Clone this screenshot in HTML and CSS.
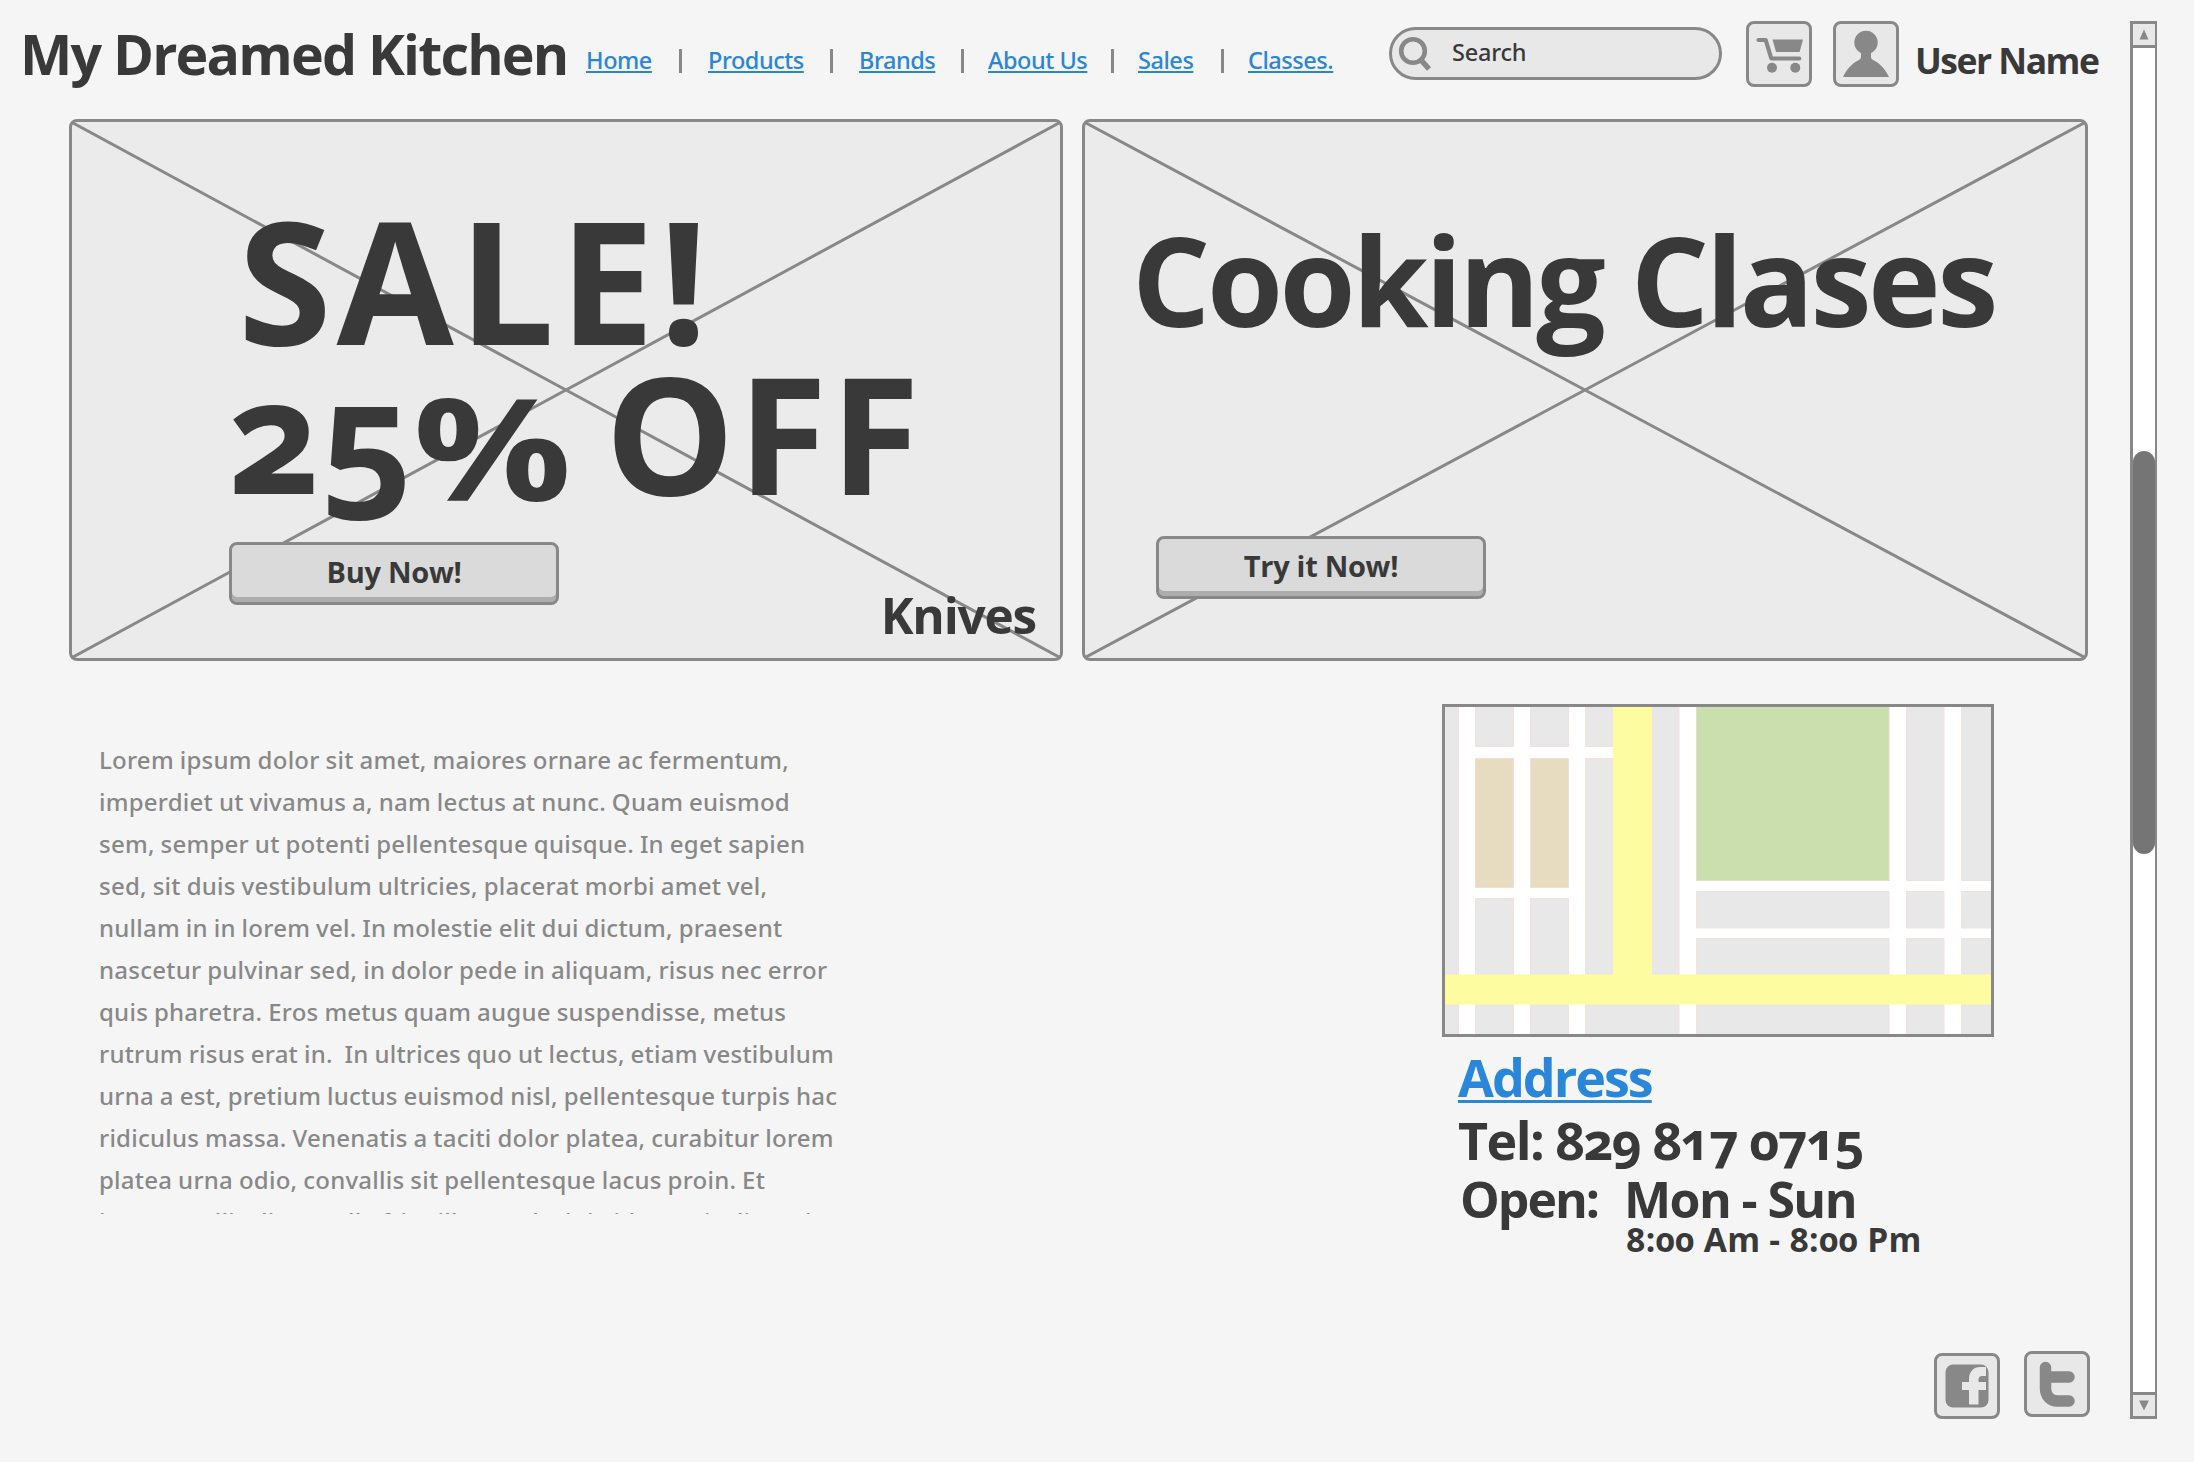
FILE: index.html
```html
<!DOCTYPE html>
<html lang="en">
<head>
<meta charset="utf-8">
<title>My Dreamed Kitchen</title>
<link rel="stylesheet" href="styles.css">
</head>
<body>
<div class="page">
  <div class="content">
    <header class="header">
      <h1 class="brand">My Dreamed Kitchen</h1>
      <nav class="nav">
        <a href="#">Home</a><i class="sep"></i>
        <a href="#">Products</a><i class="sep"></i>
        <a href="#">Brands</a><i class="sep"></i>
        <a href="#">About Us</a><i class="sep"></i>
        <a href="#">Sales</a><i class="sep"></i>
        <a href="#">Classes.</a>
      </nav>
      <div class="search">
        <svg class="search-icon" width="36" height="40" viewBox="0 0 36 40" fill="none" stroke="#888">
          <circle cx="17" cy="18" r="11.8" stroke-width="4.6"/>
          <path d="M25 27 33 36" stroke-width="5.5"/>
        </svg>
        <span class="search-label">Search</span>
      </div>
      <div class="tile cart">
        <svg width="60" height="60" viewBox="0 0 60 60" fill="#888">
          <path d="M9.500 16h7.200l5.600 18.500h28" fill="none" stroke="#888" stroke-width="4.200" stroke-linecap="round" stroke-linejoin="round"/>
          <path d="M23.500 15.500h30.500l-3.400 12.500H27z"/>
          <circle cx="23" cy="43.700" r="5"/><circle cx="46.300" cy="43.700" r="5"/>
        </svg>
      </div>
      <div class="tile user">
        <svg width="60" height="60" viewBox="0 0 60 60" fill="#888">
          <circle cx="30" cy="18.500" r="11.700"/>
          <path d="M25 27h10v5.500c0 2.500 1 2.800 3 4C44 39.500 50 46 53 53H7c3-7 9-13.500 15-16.500 2-1.200 3-1.500 3-4z"/>
        </svg>
      </div>
      <span class="user-name">User Name</span>
    </header>

    <section class="banners">
      <article class="banner sale">
        <svg class="cross" viewBox="0 0 988 536" preserveAspectRatio="none"><path d="M1 1 987 535M987 1 1 535"/></svg>
        <h2 class="sale-title">SALE!</h2>
        <p class="sale-off"><span class="digits">25</span><span class="percent">%</span><span class="off">OFF</span></p>
        <div class="sale-foot">
          <button class="button">Buy Now!</button>
          <span class="knives">Knives</span>
        </div>
      </article>
      <article class="banner classes">
        <svg class="cross" viewBox="0 0 1000 536" preserveAspectRatio="none"><path d="M1 1 999 535M999 1 1 535"/></svg>
        <h2 class="classes-title">Cooking Clases</h2>
        <button class="button">Try it Now!</button>
      </article>
    </section>

    <section class="info">
      <p class="copy">Lorem ipsum dolor sit amet, maiores ornare ac fermentum,
imperdiet ut vivamus a, nam lectus at nunc. Quam euismod
sem, semper ut potenti pellentesque quisque. In eget sapien
sed, sit duis vestibulum ultricies, placerat morbi amet vel,
nullam in in lorem vel. In molestie elit dui dictum, praesent
nascetur pulvinar sed, in dolor pede in aliquam, risus nec error
quis pharetra. Eros metus quam augue suspendisse, metus
rutrum risus erat in.  In ultrices quo ut lectus, etiam vestibulum
urna a est, pretium luctus euismod nisl, pellentesque turpis hac
ridiculus massa. Venenatis a taciti dolor platea, curabitur lorem
platea urna odio, convallis sit pellentesque lacus proin. Et
ipsum mollis diam nulla fringilla sem lacinia id mauris dis orci</p>
      <div class="contact">
        <svg class="map" width="552" height="333" viewBox="0 0 552 333">
          <rect width="552" height="333" fill="#fff"/>
          <g fill="#e8e8e8" stroke="#f2e2de">
            <path d="M-2-2H16.500V270.500H-2zM33.500-2H71.500V42.500H33.500zM88.500-2H126.500V42.500H88.500zM143.500-2H171V42.500H143.500zM143.500 54.500H171V270.500H143.500zM210-2H237V270.500H210z"/>
            <path d="M464.500-2H502V176.500H464.500zM519.500-2H560V176.500H519.500z"/>
            <path d="M254.500 187.500H447V224H254.500zM464.500 187.500H502V224H464.500zM519.500 187.500H560V224H519.500z"/>
            <path d="M254.500 234.500H447V270.500H254.500zM464.500 234.500H502V270.500H464.500zM519.500 234.500H560V270.500H519.500z"/>
            <path d="M33.500 194.500H71.500V270.500H33.500zM88.500 194.500H126.500V270.500H88.500z"/>
            <path d="M-2 300.500H16.500V340H-2zM33.500 300.500H71.500V340H33.500zM88.500 300.500H126.500V340H88.500zM143.500 300.500H237V340H143.500zM254.500 300.500H447V340H254.500zM464.500 300.500H502V340H464.500zM519.500 300.500H560V340H519.500z"/>
          </g>
          <rect x="254.500" y="-2" width="192.500" height="178.500" fill="#cbdfae" stroke="#e3dccb"/>
          <path d="M33.500 54.500H71.500V183.500H33.500zM88.500 54.500H126.500V183.500H88.500z" fill="#e8dcc0" stroke="#f2dfd4"/>
          <path d="M171 0H210V270.500H552V300.500H0V270.500H171z" fill="#fefca0"/>
          <rect x="1.500" y="1.500" width="549" height="330" fill="none" stroke="#888" stroke-width="3"/>
        </svg>
        <a class="address" href="#">Address</a>
        <p class="tel">Tel: 829 817 0715</p>
        <div class="hours">
          <span class="open">Open:</span>
          <div>
            <p class="days">Mon - Sun</p>
            <p class="time">8:00 Am - 8:00 Pm</p>
          </div>
        </div>
      </div>
    </section>

    <footer class="social">
      <div class="tile">
        <svg width="60" height="60" viewBox="0 0 60 60">
          <rect x="8.500" y="8.500" width="43" height="43" rx="7.500" fill="#888"/>
          <path d="M32 48.500V34h-7v-8h7v-3c0-7.500 5-12 11-12h6v9h-3.500c-3 0-4 1.500-4 4v2H49v8h-7.500v14.500z" fill="#e8e8e8"/>
        </svg>
      </div>
      <div class="tile twitter">
        <svg width="60" height="60" viewBox="0 0 60 60" fill="none" stroke="#888" stroke-width="11.500" stroke-linecap="round">
          <path d="M18.500 13.500V34c0 8 5 13 12 13H42M19 23H42"/>
        </svg>
      </div>
    </footer>
  </div>

  <aside class="scrollbar">
    <div class="arrow"><svg width="22" height="22" viewBox="0 0 22 22"><path d="M11 5.500 15.500 15.500h-9z" fill="#888"/></svg></div>
    <div class="track"><div class="thumb"></div></div>
    <div class="arrow down"><svg width="22" height="22" viewBox="0 0 22 22"><path d="M11 15.500 16 5.500H6z" fill="#888"/></svg></div>
  </aside>
</div>
</body>
</html>
```
FILE: styles.css
```css
* { box-sizing: border-box; margin: 0; padding: 0; }

body {
  background: #f5f5f5;
  color: #393939;
  font-family: "Open Sans", "Noto Sans", sans-serif;
  font-weight: 700;
  font-feature-settings: "onum";
  overflow: hidden;
}

svg { display: block; }
a { color: #2986d8; text-decoration-skip-ink: none; }

.page { display: flex; width: 2194px; height: 1462px; }
.content { display: flex; flex-direction: column; width: 2130px; }

/* Header */
.header { display: flex; align-items: flex-start; height: 119px; padding-left: 20px; white-space: nowrap; }
.brand { width: 566px; font-size: 55.5px; line-height: 107px; letter-spacing: -1.8px; }
.nav {
  display: grid;
  grid-template-columns: 67px 55px 96px 55px 77px 52px 98px 52px 58px 52px 86px;
  font: 500 23.5px/121px "Noto Sans", sans-serif;
  letter-spacing: -0.45px;
}
.nav a { text-decoration-thickness: 2px; text-underline-offset: 2px; }
.sep { justify-self: center; width: 3px; height: 24px; margin-top: 49px; background: #888; }
.search {
  display: flex;
  width: 333px; height: 53px;
  margin: 27px 0 0 55px;
  border: 3px solid #888; border-radius: 27px;
  background: #e8e8e8;
}
.search-icon { margin: 3px 0 0 4px; }
.search-label { margin-left: 20px; font: 500 23.5px/45px "Noto Sans", sans-serif; letter-spacing: -0.2px; }
.tile { width: 66px; height: 66px; border: 3px solid #888; border-radius: 8px; background: #e8e8e8; }
.cart { margin: 21px 0 0 24px; }
.user { margin: 21px 0 0 21px; }
.user-name { margin-left: 16px; font-size: 35.5px; line-height: 120px; letter-spacing: -1.5px; }

/* Banners */
.banners { display: flex; gap: 19px; padding-left: 69px; }
.banner {
  position: relative;
  height: 542px;
  border: 3px solid #888; border-radius: 8px;
  background: #ebebeb;
}
.banner > * { position: relative; }
.banner > .cross { position: absolute; inset: 0; width: 100%; height: 100%; fill: none; stroke: #888; stroke-width: 3; }
.sale { width: 994px; padding-top: 73px; }
.sale-title { padding-left: 166px; font-size: 170px; line-height: 168px; letter-spacing: 4.8px; }
.sale-off { display: flex; padding-left: 156px; font-size: 163px; line-height: 138px; }
.digits { width: 185px; font-size: 160px; }
.percent { width: 154px; font-size: 141px; transform: translateY(14px) scaleX(1.25); transform-origin: left; }
.off { margin-left: 38px; letter-spacing: 3px; }
.sale-foot { display: flex; justify-content: space-between; padding: 41px 24px 0 157px; }
.knives { margin-top: 48px; font-size: 49.5px; line-height: 50px; letter-spacing: -1.2px; }
.button {
  width: 330px; height: 63px;
  border: 3px solid #888; border-radius: 8px;
  background: #dadada;
  box-shadow: inset 0 -5px #adadad;
  color: inherit;
  font: 700 29px/50px "Open Sans", sans-serif;
  letter-spacing: -0.3px;
  padding-bottom: 4px;
}
.classes { width: 1006px; padding-top: 93px; }
.classes-title { padding-left: 47px; font-size: 123px; line-height: 130px; letter-spacing: -3.5px; }
.classes .button { display: block; margin: 191px 0 0 71px; }

/* Text and contact */
.info { display: flex; flex: 1; padding-left: 99px; }
.copy {
  width: 1343px; height: 475px;
  margin-top: 78px;
  overflow: hidden;
  color: #888;
  font: 500 24px/42px "Noto Sans", sans-serif;
  letter-spacing: 0.24px;
  word-spacing: -0.6px;
  white-space: pre;
}
.contact { padding-top: 43px; white-space: nowrap; }
.address {
  display: block;
  margin: 15px 0 0 16px;
  font-size: 52px; line-height: 50px; letter-spacing: -2px;
  text-decoration-thickness: 3px; text-underline-offset: 3px;
}
.tel { margin: 13px 0 0 16px; font-size: 52px; line-height: 50px; letter-spacing: -1.6px; }
.hours { display: grid; grid-template-columns: 164px auto; margin: 11px 0 0 18px; font-size: 50px; line-height: 46px; }
.open { letter-spacing: -2px; }
.days { letter-spacing: -1.6px; }
.time { padding-left: 2px; font-size: 33.5px; line-height: 34px; letter-spacing: 0.3px; }

.social { display: flex; justify-content: flex-end; align-items: flex-end; gap: 24px; padding: 0 40px 43px 0; }
.twitter { margin-bottom: 2px; }

/* Scrollbar */
.scrollbar {
  display: flex; flex-direction: column;
  width: 27px; height: 1398px; margin-top: 21px;
  border: 3px solid #888; border-right-width: 2px;
  background: #fff;
}
.arrow { height: 24px; background: #e8e8e8; border-bottom: 3px solid #888; }
.arrow.down { border-bottom: 0; border-top: 3px solid #888; }
.track { flex: 1; padding-top: 403px; }
.thumb { height: 403px; border-radius: 11px; background: #757575; }
```
